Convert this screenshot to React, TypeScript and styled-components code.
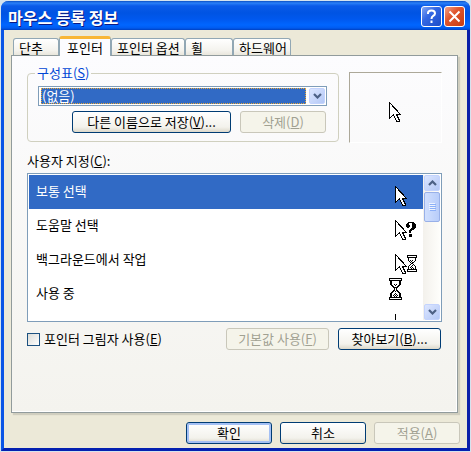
import React, { useState } from "react";
import styled, { createGlobalStyle, css } from "styled-components";

const GlobalStyle = createGlobalStyle`
  * { box-sizing: border-box; }
  body {
    margin: 0;
    background: #d5e3ee;
    color: #000;
    font: 13px/16px "Noto Sans CJK KR", sans-serif;
  }
  button, input, select { font: inherit; color: inherit; margin: 0; }
`;

const Window = styled.main`
  margin: 1px;
  border: 3px solid;
  border-top: 0;
  border-color: #0a4fe8 #0a1fa8 #0420b0 #0a55e6;
  border-radius: 8px 8px 0 0;
  background: #ece9d8;
`;

const TitleBar = styled.header`
  display: flex;
  align-items: center;
  gap: 2px;
  height: 29px;
  margin: 0 -3px;
  padding: 2px 5px 0 7px;
  border-radius: 7px 7px 0 0;
  background: linear-gradient(#0a4fc4 0, #2a80f8 2px, #0a5ae8 5px, #0054e3 12px, #0058ee 18px, #0066ff 24px, #005bf0 27px, #0040c0 29px);
`;

const Title = styled.h1`
  flex: 1;
  margin: 0;
  color: #fff;
  font-size: 16px;
  line-height: 24px;
  font-weight: 700;
  text-shadow: 1px 1px 0 #0a1883;
`;

const CaptionButton = styled.button<{ $close?: boolean }>`
  display: grid;
  place-items: center;
  width: 21px;
  height: 21px;
  padding: 0;
  border: 1px solid #fff;
  border-radius: 3px;
  background: ${(p) =>
    p.$close
      ? "linear-gradient(135deg, #f0a088, #e0562e 40%, #c83c10)"
      : "linear-gradient(135deg, #86a8f4, #3468e4 40%, #1c4cc8)"};
`;

const Content = styled.div`
  padding: 6px 7px 4px;
`;

const TabList = styled.div`
  display: flex;
  align-items: flex-end;
  padding-left: 2px;
`;

const Tab = styled.button<{ $width: number; $active?: boolean }>`
  width: ${(p) => p.$width}px;
  height: 17px;
  padding: 0 0 0 5px;
  border: 1px solid #91a7b4;
  border-bottom: 0;
  border-radius: 3px 3px 0 0;
  background: linear-gradient(#fff, #f4f3ee 70%, #e8e6dc);
  text-align: left;
  white-space: nowrap;
  line-height: 17px;
  ${(p) =>
    p.$active &&
    css`
      height: 20px;
      margin-bottom: -1px;
      padding-left: 7px;
      border-top: 3px solid #f8b636;
      background: #fcfcfe;
      line-height: 14px;
      z-index: 1;
    `}
`;

const Panel = styled.section`
  min-height: 358px;
  margin-right: 2px;
  padding: 16px 15px;
  border: 1px solid #919b9c;
  background: linear-gradient(#fcfcfe, #f4f3ee);
  box-shadow: inset -1px -1px 0 #fff, 2px 2px 1px #d0cebf;
`;

const SchemeRow = styled.div`
  display: flex;
  gap: 10px;
`;

const Fieldset = styled.fieldset`
  flex: 1;
  min-width: 0;
  height: 77px;
  margin: -7px 0 0;
  padding: 5px 11px 0 10px;
  border: 1px solid #d0d0bf;
  border-radius: 4px;
`;

const Legend = styled.legend`
  margin-left: -3px;
  padding: 0 2px;
  color: #0046d5;
`;

const Combo = styled.div`
  display: grid;
  grid-template-columns: 1fr 16px;
  gap: 2px;
  height: 20px;
  padding: 1px;
  border: 1px solid #7f9db9;
  background: #fff;
`;

const Select = styled.select`
  appearance: none;
  min-width: 0;
  height: 16px;
  margin: 0 1px;
  padding: 0;
  border: 1px dotted #e8a838;
  border-radius: 0;
  outline: 0;
  background: #316ac5;
  color: #fff;
  line-height: 14px;
`;

const arrowFace = css`
  display: grid;
  place-items: center;
  padding: 0;
  border: 1px solid #c3d3fd;
  border-radius: 2px;
  background: linear-gradient(135deg, #dce6ff, #b4c8f6);
`;

const ComboArrow = styled.span`
  ${arrowFace}
`;

const ButtonRow = styled.div<{ $top: number; $gap: number; $right?: number }>`
  display: flex;
  justify-content: flex-end;
  gap: ${(p) => p.$gap}px;
  margin-top: ${(p) => p.$top}px;
  padding-right: ${(p) => p.$right ?? 0}px;
`;

const PushButton = styled.button<{ $width: number; $default?: boolean }>`
  width: ${(p) => p.$width}px;
  height: 22px;
  padding: 0;
  border: 1px solid #003c74;
  border-radius: 3px;
  background: linear-gradient(#fff, #f3f2ec 75%, #dcd8ca);
  line-height: 20px;
  white-space: nowrap;
  ${(p) => p.$default && "box-shadow: inset 0 0 0 2px #a4c0f4;"}
  &:disabled {
    border-color: #c9c7ba;
    background: #f5f4ea;
    color: #a1a192;
  }
`;

const Preview = styled.div`
  display: grid;
  place-items: center;
  width: 93px;
  height: 71px;
  padding: 10px 2px 0 0;
  border: 1px solid #fff;
  border-top-color: #aca899;
  border-left-color: #aca899;
`;

const ListLabel = styled.div`
  margin: 10px 0 4px;
`;

const ListFrame = styled.div`
  display: flex;
  height: 149px;
  padding: 1px;
  border: 1px solid #7f9db9;
  background: #fff;
`;

const List = styled.ul`
  flex: 1;
  height: 145px;
  margin: 0;
  padding: 0;
  overflow: hidden;
  list-style: none;
`;

const ListItem = styled.li<{ $selected?: boolean }>`
  display: flex;
  justify-content: space-between;
  height: 34px;
  padding: 0 0 0 7px;
  line-height: 32px;
  background: ${(p) => (p.$selected ? "#316ac5" : "#fff")};
  color: ${(p) => (p.$selected ? "#fff" : "#000")};
`;

const CursorSvg = styled.svg`
  display: block;
  flex: none;
`;

const ScrollBar = styled.div`
  display: flex;
  flex-direction: column;
  width: 17px;
  padding: 0 0 0 1px;
  background: linear-gradient(90deg, #f3f1ec, #fefefb);
`;

const ScrollButton = styled.button`
  ${arrowFace}
  height: 16px;
`;

const ScrollThumb = styled.div`
  display: grid;
  place-items: center;
  height: 30px;
  margin: 1px 0 auto;
  border: 1px solid #98b0e8;
  border-radius: 2px;
  background: linear-gradient(90deg, #d0dffe, #b8cdfa);
`;

const OptionsRow = styled.div`
  display: flex;
  align-items: center;
  gap: 9px;
  margin-top: 6px;
  padding-right: 1px;
`;

const CheckLabel = styled.label`
  display: flex;
  flex: 1;
  align-items: center;
  gap: 4px;
  white-space: nowrap;
`;

const CheckBox = styled.input`
  appearance: none;
  width: 13px;
  height: 13px;
  border: 1px solid #1c5180;
  background: linear-gradient(135deg, #dcdcd7, #fff);
  &:checked { background: #21a121; }
`;

const Chevron = ({ up = false }: { up?: boolean }) => (
  <svg width="9" height="6" viewBox="0 0 9 6" aria-hidden="true">
    <path d={up ? "M1 5L4.5 1.5L8 5" : "M1 1L4.5 4.5L8 1"} fill="none" stroke="#4d6185" strokeWidth="2.2" />
  </svg>
);

const Pointer = () => (
  <path
    d="M.5 .5V16.5L4.5 12.5L7.5 19.5H10.5V18.5L7.5 12.5H11.5Z"
    fill="#fff"
    stroke="#000"
    shapeRendering="crispEdges"
  />
);

const Hourglass = () => (
  <g shapeRendering="crispEdges">
    <path d="M0 0H13V3H0ZM0 19H13V22H0Z" fill="#000" />
    <path d="M1 1H12V2H1ZM1 20H12V21H1Z" fill="#fff" />
    <path
      d="M1 3h2v4h-2zM10 3h2v4h-2zM2 7h2v1h-2zM9 7h2v1h-2zM3 8h2v1h-2zM8 8h2v1h-2zM4 9h2v1h-2zM7 9h2v1h-2zM5 10h1v2h-1zM7 10h1v2h-1zM4 12h2v1h-2zM7 12h2v1h-2zM3 13h2v1h-2zM8 13h2v1h-2zM2 14h2v1h-2zM9 14h2v1h-2zM1 15h2v4h-2zM10 15h2v4h-2z"
      fill="#000"
    />
    <path
      d="M5 6h1v1h-1zM7 6h1v1h-1zM6 7h1v1h-1zM6 9h1v1h-1zM6 13h1v1h-1zM6 15h1v1h-1zM5 16h1v1h-1zM7 16h1v1h-1zM4 17h1v1h-1zM6 17h1v1h-1zM8 17h1v1h-1zM5 18h1v1h-1zM7 18h1v1h-1z"
      fill="#000"
    />
  </g>
);

const SmallHourglass = () => (
  <g shapeRendering="crispEdges">
    <path d="M0 0H10V3H0ZM0 14H10V17H0Z" fill="#000" />
    <path d="M1 1H9V2H1ZM1 15H9V16H1Z" fill="#fff" />
    <path
      d="M1 3h1v3h-1zM8 3h1v3h-1zM2 6h1v1h-1zM7 6h1v1h-1zM3 7h1v1h-1zM6 7h1v1h-1zM4 8h2v1h-2zM3 9h1v1h-1zM6 9h1v1h-1zM2 10h1v1h-1zM7 10h1v1h-1zM1 11h1v3h-1zM8 11h1v3h-1z"
      fill="#000"
    />
    <path d="M3 5h1v1h-1zM5 5h1v1h-1zM4 6h1v1h-1zM5 7h1v1h-1zM5 10h1v1h-1zM4 11h1v1h-1zM3 12h1v1h-1zM5 12h1v1h-1zM6 13h1v1h-1zM4 13h1v1h-1z" fill="#000" />
  </g>
);

const cursors = {
  arrow: (
    <CursorSvg width="28" height="34" viewBox="0 0 28 34">
      <g transform="translate(0 11)"><Pointer /></g>
    </CursorSvg>
  ),
  help: (
    <CursorSvg width="28" height="34" viewBox="0 0 28 34">
      <g transform="translate(0 11)"><Pointer /></g>
      <path
        d="M12 13h7v1h1v1h1v4h-1v1h-1v1h-2v1h-1v2h-2v-3h1v-1h1v-1h1v-5h-3v2h1v2h-1v1h-2v-1h-1v-3h1v-1h1zM14 25h3v3h-3z"
        fill="#000"
        shapeRendering="crispEdges"
      />
    </CursorSvg>
  ),
  background: (
    <CursorSvg width="28" height="34" viewBox="0 0 28 34">
      <g transform="translate(0 11)"><Pointer /></g>
      <g transform="translate(12 12)"><SmallHourglass /></g>
    </CursorSvg>
  ),
  busy: (
    <CursorSvg width="34" height="34" viewBox="0 0 34 34">
      <g transform="translate(0 1)"><Hourglass /></g>
    </CursorSvg>
  ),
  cross: (
    <CursorSvg width="28" height="34" viewBox="0 0 28 34">
      <path d="M.5 3V22M-9 12.5H10" stroke="#000" />
    </CursorSvg>
  ),
};

const items: { name: string; cursor: keyof typeof cursors }[] = [
  { name: "보통 선택", cursor: "arrow" },
  { name: "도움말 선택", cursor: "help" },
  { name: "백그라운드에서 작업", cursor: "background" },
  { name: "사용 중", cursor: "busy" },
  { name: "", cursor: "cross" },
];

const tabs = [
  { name: "단추", width: 46 },
  { name: "포인터", width: 52 },
  { name: "포인터 옵션", width: 74 },
  { name: "휠", width: 48 },
  { name: "하드웨어", width: 58 },
];

export default function App() {
  const [selected, setSelected] = useState(0);
  return (
    <>
      <GlobalStyle />
      <Window>
        <TitleBar>
          <Title>마우스 등록 정보</Title>
          <CaptionButton aria-label="도움말">
            <svg width="13" height="15" viewBox="0 0 13 15">
              <path d="M3 5V4Q3 1.5 6.5 1.5Q10 1.5 10 4.5Q10 6 8 7Q6.5 8 6.5 10M6.5 11.5V14" fill="none" stroke="#fff" strokeWidth="2" />
            </svg>
          </CaptionButton>
          <CaptionButton $close aria-label="닫기">
            <svg width="13" height="13" viewBox="0 0 13 13">
              <path d="M1.5 1.5L11.5 11.5M11.5 1.5L1.5 11.5" stroke="#fff" strokeWidth="2" />
            </svg>
          </CaptionButton>
        </TitleBar>
        <Content>
          <TabList role="tablist">
            {tabs.map((t, i) => (
              <Tab key={t.name} role="tab" aria-selected={i === 1} $width={t.width} $active={i === 1}>
                {t.name}
              </Tab>
            ))}
          </TabList>
          <Panel>
            <SchemeRow>
              <Fieldset>
                <Legend>구성표(<u>S</u>)</Legend>
                <Combo>
                  <Select aria-label="구성표">
                    <option>(없음)</option>
                  </Select>
                  <ComboArrow><Chevron /></ComboArrow>
                </Combo>
                <ButtonRow $top={5} $gap={9} $right={1}>
                  <PushButton $width={159}>다른 이름으로 저장(<u>V</u>)...</PushButton>
                  <PushButton $width={86} disabled>삭제(<u>D</u>)</PushButton>
                </ButtonRow>
              </Fieldset>
              <Preview>
                <CursorSvg width="12" height="21" viewBox="0 0 12 21"><Pointer /></CursorSvg>
              </Preview>
            </SchemeRow>
            <ListLabel id="custom">사용자 지정(<u>C</u>):</ListLabel>
            <ListFrame>
              <List role="listbox" aria-labelledby="custom">
                {items.map((item, i) => (
                  <ListItem
                    key={item.cursor}
                    role="option"
                    aria-selected={i === selected}
                    $selected={i === selected}
                    onClick={() => setSelected(i)}
                  >
                    <span>{item.name}</span>
                    {cursors[item.cursor]}
                  </ListItem>
                ))}
              </List>
              <ScrollBar>
                <ScrollButton aria-label="위로"><Chevron up /></ScrollButton>
                <ScrollThumb>
                  <svg width="7" height="8" viewBox="0 0 7 8">
                    <path d="M0 .5H6M0 2.5H6M0 4.5H6M0 6.5H6" stroke="#eef4fe" />
                    <path d="M1 1.5H7M1 3.5H7M1 5.5H7M1 7.5H7" stroke="#8cb0f8" />
                  </svg>
                </ScrollThumb>
                <ScrollButton aria-label="아래로"><Chevron /></ScrollButton>
              </ScrollBar>
            </ListFrame>
            <OptionsRow>
              <CheckLabel>
                <CheckBox type="checkbox" />
                <span>포인터 그림자 사용(<u>E</u>)</span>
              </CheckLabel>
              <PushButton $width={103} disabled>기본값 사용(<u>F</u>)</PushButton>
              <PushButton $width={103}>찾아보기(<u>B</u>)...</PushButton>
            </OptionsRow>
          </Panel>
          <ButtonRow $top={9} $gap={8}>
            <PushButton $width={86} $default>확인</PushButton>
            <PushButton $width={86}>취소</PushButton>
            <PushButton $width={86} disabled>적용(<u>A</u>)</PushButton>
          </ButtonRow>
        </Content>
      </Window>
    </>
  );
}
